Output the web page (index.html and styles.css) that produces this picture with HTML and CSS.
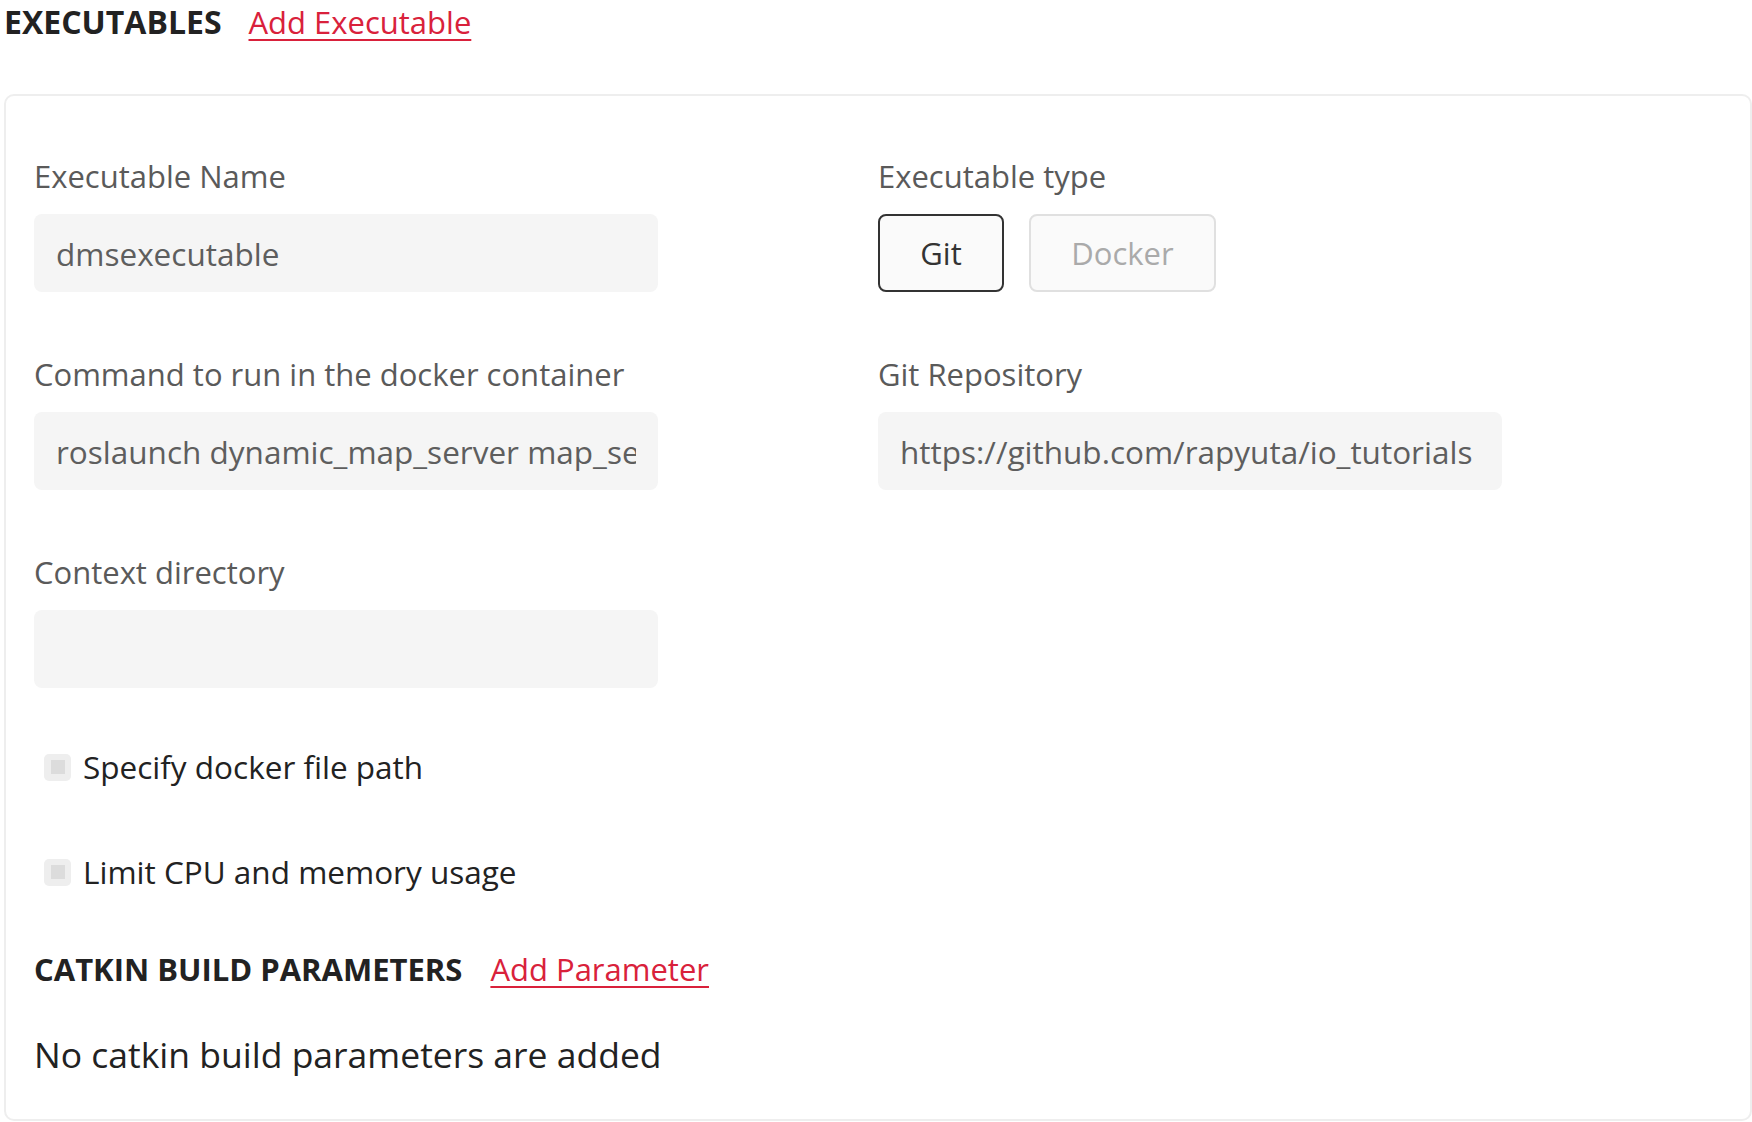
FILE: index.html
```html
<!DOCTYPE html>
<html lang="en">
<head>
<meta charset="utf-8">
<title>Executables</title>
<link rel="stylesheet" href="styles.css">
</head>
<body>
<div class="section-head top-head">
  <h2 class="section-title">EXECUTABLES</h2>
  <a class="section-link" href="#">Add Executable</a>
</div>
<div class="card">
  <div class="grid">
    <div class="field">
      <label class="field-label">Executable Name</label>
      <input class="text-input" type="text" value="dmsexecutable" readonly>
    </div>
    <div class="field">
      <label class="field-label">Executable type</label>
      <div class="toggle-group">
        <button class="toggle toggle-active" type="button">Git</button>
        <button class="toggle toggle-disabled" type="button">Docker</button>
      </div>
    </div>
    <div class="field">
      <label class="field-label">Command to run in the docker container</label>
      <input class="text-input" type="text" value="roslaunch dynamic_map_server map_server.launch" readonly>
    </div>
    <div class="field">
      <label class="field-label">Git Repository</label>
      <input class="text-input" type="text" value="https://github.com/rapyuta/io_tutorials" readonly>
    </div>
    <div class="field">
      <label class="field-label">Context directory</label>
      <input class="text-input" type="text" value="" readonly>
    </div>
    <div class="field"></div>
  </div>

  <div class="checks">
    <div class="check-row"><span class="checkbox"><span class="checkbox-inner"></span></span><span class="check-label">Specify docker file path</span></div>
    <div class="check-row"><span class="checkbox"><span class="checkbox-inner"></span></span><span class="check-label">Limit CPU and memory usage</span></div>
  </div>

  <div class="section-head sub-head">
    <h3 class="section-title">CATKIN BUILD PARAMETERS</h3>
    <a class="section-link" href="#">Add Parameter</a>
  </div>
  <p class="empty-note">No catkin build parameters are added</p>
</div>
</body>
</html>
```

FILE: styles.css
```css
html, body {
  margin: 0;
  padding: 0;
  background: #ffffff;
}

body {
  font-family: "Open Sans", "Lato", sans-serif;
  color: #222222;
  overflow: hidden;
}

.section-head {
  display: flex;
  align-items: center;
  gap: 28px;
  height: 36px;
}

.top-head {
  padding-left: 4px;
  margin-top: 4px;
  gap: 27px;
}

.section-title {
  margin: 0;
  font-size: 31px;
  font-weight: 700;
  line-height: 36px;
  color: #222222;
}

.top-head .section-title {
  font-size: 32px;
}

.section-link {
  font-size: 31px;
  line-height: 36px;
  color: #d9213b;
  text-decoration: underline;
  text-underline-offset: 5px;
  text-decoration-thickness: 2px;
}

.card {
  margin: 54px 0 0 4px;
  border: 2px solid #eeeeee;
  border-radius: 10px;
  padding: 62px 28px 45px;
}

.grid {
  display: grid;
  grid-template-columns: 1fr 1fr;
  row-gap: 64px;
}

.field {
  display: flex;
  flex-direction: column;
  align-items: flex-start;
}

.field-label {
  font-size: 31px;
  line-height: 36px;
  color: #5a5a5a;
  margin-bottom: 20px;
}

.text-input {
  box-sizing: border-box;
  width: 624px;
  height: 78px;
  border: none;
  outline: none;
  border-radius: 8px;
  background: #f5f5f5;
  padding: 0 22px;
  font-family: "Open Sans", "Lato", sans-serif;
  font-size: 31.5px;
  color: #5e5e5e;
}

.toggle-group {
  display: flex;
  gap: 25px;
}

.toggle {
  box-sizing: border-box;
  height: 78px;
  border-radius: 8px;
  background: #fafafa;
  font-family: "Open Sans", "Lato", sans-serif;
  font-size: 31px;
  padding: 0;
}

.toggle-active {
  width: 126px;
  border: 2px solid #333333;
  color: #333333;
}

.toggle-disabled {
  width: 187px;
  border: 2px solid #e0e0e0;
  color: #aaaaaa;
}

.checks {
  margin-top: 61px;
  display: flex;
  flex-direction: column;
  gap: 69px;
}

.check-row {
  display: flex;
  align-items: center;
  height: 36px;
  padding-left: 10px;
}

.checkbox {
  box-sizing: border-box;
  width: 27px;
  height: 27px;
  border-radius: 5px;
  background: #eeeeee;
  display: flex;
  align-items: center;
  justify-content: center;
  margin-right: 12px;
}

.checkbox-inner {
  width: 14px;
  height: 14px;
  background: #dcdcdc;
}

.check-label {
  font-size: 31.5px;
  line-height: 36px;
  color: #222222;
}

.sub-head {
  margin-top: 61px;
}

.empty-note {
  margin: 47px 0 0;
  font-size: 35.5px;
  line-height: 40px;
  color: #222222;
}
```
